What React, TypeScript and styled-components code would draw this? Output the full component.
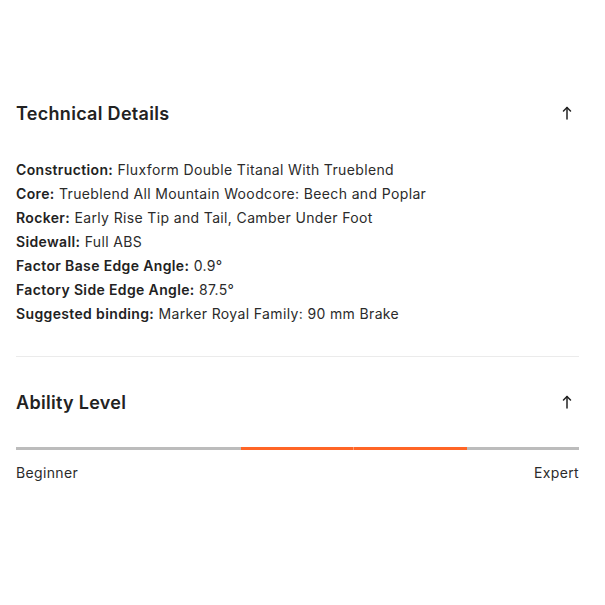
import React from "react";
import styled, { createGlobalStyle } from "styled-components";

const Global = createGlobalStyle`
  html, body { margin: 0; padding: 0; background: #fff; }
  body { font-family: Inter, "Noto Sans", "Liberation Sans", sans-serif; color: #222; }
`;

const Page = styled.div`
  padding: 68px 26px 0 16px;
`;

const Section = styled.section<{ $divider?: boolean }>`
  padding: 21px 0 30px;
  border-bottom: ${(p) => (p.$divider ? "1px solid #ebebeb" : "none")};
`;

const Header = styled.div`
  height: 48px;
  display: flex;
  align-items: center;
  justify-content: space-between;
`;

const Title = styled.h2`
  margin: 0;
  font-size: 18px;
  font-weight: 600;
  color: #222;
  letter-spacing: 0.3px;
`;

const ToggleIcon = styled.svg`
  width: 10px;
  height: 14px;
  margin-right: 7px;
  display: block;
`;

const SpecList = styled.ul`
  list-style: none;
  margin: 21px 0 0;
  padding: 0;
`;

const SpecItem = styled.li`
  font-size: 14px;
  line-height: 24px;
  color: #2b2b2b;
  letter-spacing: 0.36px;
`;

const SpecLabel = styled.span`
  font-weight: 600;
  color: #222;
`;

const Bar = styled.div`
  margin-top: 21px;
  display: flex;
  height: 3px;
`;

const Segment = styled.div<{ $active?: boolean; $split?: boolean }>`
  flex: 1;
  background: ${(p) => (p.$active ? "#ff6526" : "#bcbcbc")};
  border-left: ${(p) => (p.$split ? "1px solid #ff9a70" : "none")};
`;

const Scale = styled.div`
  margin-top: 13px;
  display: flex;
  justify-content: space-between;
  font-size: 14px;
  line-height: 20px;
  color: #2b2b2b;
  letter-spacing: 0.36px;
`;

const Arrow = () => (
  <ToggleIcon viewBox="0 0 10 14" fill="none" stroke="#222" strokeWidth="1.5" strokeLinecap="round" strokeLinejoin="round">
    <path d="M5 13V1.5" />
    <path d="M1.5 5L5 1.5L8.5 5" />
  </ToggleIcon>
);

const specs: [string, string][] = [
  ["Construction:", "Fluxform Double Titanal With Trueblend"],
  ["Core:", "Trueblend All Mountain Woodcore: Beech and Poplar"],
  ["Rocker:", "Early Rise Tip and Tail, Camber Under Foot"],
  ["Sidewall:", "Full ABS"],
  ["Factor Base Edge Angle:", "0.9°"],
  ["Factory Side Edge Angle:", "87.5°"],
  ["Suggested binding:", "Marker Royal Family: 90 mm Brake"],
];

const levels = [false, false, true, true, false];

export default function App() {
  return (
    <>
      <Global />
      <Page>
        <Section $divider>
          <Header>
            <Title>Technical Details</Title>
            <Arrow />
          </Header>
          <SpecList>
            {specs.map(([label, value]) => (
              <SpecItem key={label}>
                <SpecLabel>{label}</SpecLabel> {value}
              </SpecItem>
            ))}
          </SpecList>
        </Section>
        <Section>
          <Header>
            <Title>Ability Level</Title>
            <Arrow />
          </Header>
          <Bar>
            {levels.map((a, i) => (
              <Segment key={i} $active={a} $split={a && i > 0 && levels[i - 1]} />
            ))}
          </Bar>
          <Scale>
            <span>Beginner</span>
            <span>Expert</span>
          </Scale>
        </Section>
      </Page>
    </>
  );
}
